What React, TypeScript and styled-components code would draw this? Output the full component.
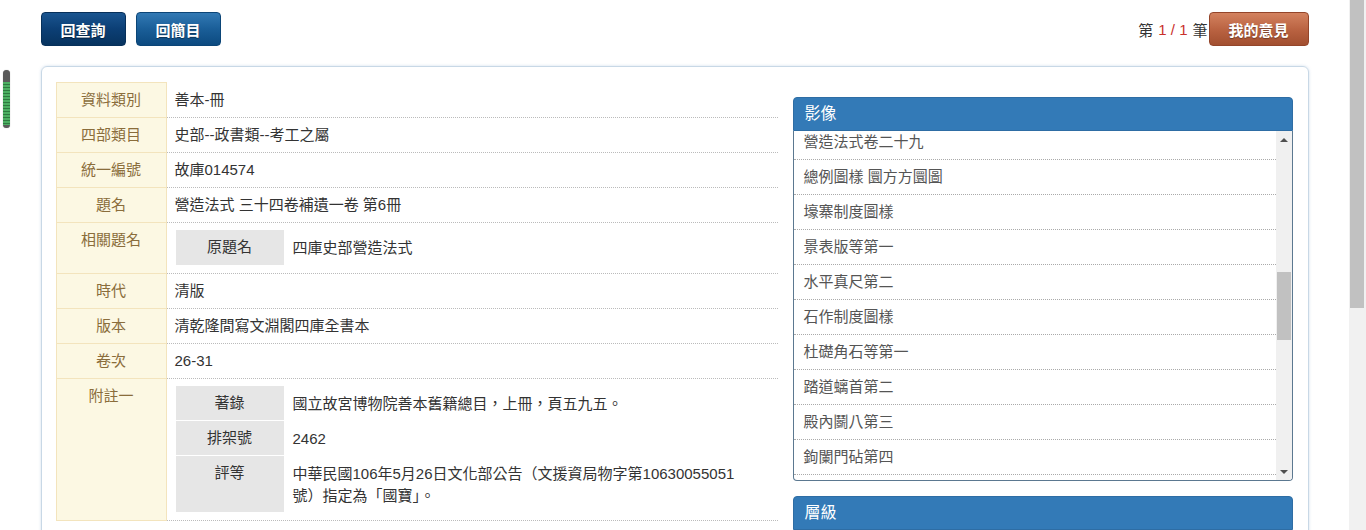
import { useEffect, useRef } from 'react';
import styled, { createGlobalStyle } from 'styled-components';

const GlobalStyle = createGlobalStyle`
  html, body {
    margin: 0;
    padding: 0;
    background: #fff;
  }
  body {
    font-family: "Liberation Sans", "Noto Sans CJK TC", sans-serif;
    font-size: 15px;
    color: #333;
    padding-right: 17px;
  }
`;

const Page = styled.div`
  width: 1268px;
  margin: 0 auto;
  padding: 12px 0 40px;
`;

const TopBar = styled.div`
  display: flex;
  align-items: center;
  justify-content: space-between;
  margin-bottom: 20px;
`;

const ButtonGroup = styled.div`
  display: flex;
  gap: 10px;
`;

const NavButton = styled.button<{ $dark?: boolean }>`
  height: 34px;
  width: 85px;
  border: 1px solid ${p => (p.$dark ? '#07305a' : '#0b4577')};
  border-radius: 4px;
  background: ${p =>
    p.$dark
      ? 'linear-gradient(to bottom, #1a5590 0%, #0c3f75 50%, #07335f 100%)'
      : 'linear-gradient(to bottom, #3279b4 0%, #1a5e98 50%, #0c4a80 100%)'};
  color: #fff;
  font-family: inherit;
  font-size: 15px;
  font-weight: bold;
  text-shadow: 0 1px 1px rgba(0, 0, 0, 0.4);
  cursor: pointer;
`;

const Pager = styled.div`
  display: flex;
  align-items: center;
  font-size: 15px;
  color: #333;
`;

const PagerNum = styled.span`
  color: #c9302c;
  margin: 0 5px;
`;

const OpinionButton = styled.button`
  height: 34px;
  width: 100px;
  margin-left: 1px;
  border: 1px solid #94452a;
  border-radius: 4px;
  background: linear-gradient(to bottom, #d3825f 0%, #b86140 55%, #a24f30 100%);
  color: #fff;
  font-family: inherit;
  font-size: 15px;
  font-weight: bold;
  text-shadow: 0 1px 1px rgba(0, 0, 0, 0.35);
  cursor: pointer;
`;

const MainPanel = styled.div`
  border: 1px solid #c8d8e6;
  border-radius: 6px;
  box-shadow: 0 0 3px rgba(120, 160, 200, 0.35);
  padding: 15px 15px 30px 14px;
  display: grid;
  grid-template-columns: 722px 500px;
  column-gap: 15px;
  align-items: start;
`;

const DetailTable = styled.table`
  width: 100%;
  border-collapse: collapse;
`;

const LabelCell = styled.th`
  width: 110px;
  box-sizing: border-box;
  background: #fcf8e3;
  border: 1px solid #f3e4bd;
  color: #8a6d3b;
  font-weight: normal;
  text-align: center;
  vertical-align: top;
  padding: 6px 8px 7px;
  line-height: 21px;
`;

const ValueCell = styled.td`
  border-bottom: 1px dotted #bbb;
  padding: 6px 8px 7px;
  line-height: 21px;
  vertical-align: top;
`;

const SubTable = styled.table`
  width: 100%;
  border-collapse: collapse;
  margin: 1px 0 0 1px;
`;

const SubLabel = styled.th`
  width: 108px;
  box-sizing: border-box;
  background: #e6e6e6;
  border-bottom: 1px solid #fff;
  color: #333;
  font-weight: normal;
  text-align: center;
  vertical-align: top;
  padding: 6px 8px 5px;
  line-height: 22px;
`;

const SubValue = styled.td`
  padding: 7px 8px 6px 9px;
  line-height: 22px;
  vertical-align: top;
`;

const SideColumn = styled.div`
  padding-top: 15px;
  display: flex;
  flex-direction: column;
  gap: 15px;
`;

const SideBox = styled.div``;

const SideHeader = styled.div`
  height: 34px;
  box-sizing: border-box;
  line-height: 32px;
  padding: 0 11px;
  background: #337ab7;
  border: 1px solid #2e6da4;
  border-radius: 4px 4px 0 0;
  color: #fff;
  font-size: 16px;
`;

const ListFrame = styled.div`
  position: relative;
  height: 350px;
  box-sizing: border-box;
  border: 1px solid #5b7890;
  border-top: none;
  border-radius: 0 0 4px 4px;
  overflow: hidden;
`;

const ImageList = styled.ul`
  list-style: none;
  margin: 0;
  padding: 0;
  height: 100%;
  overflow: hidden;
`;

const ImageItem = styled.li`
  height: 35px;
  box-sizing: border-box;
  line-height: 34px;
  padding: 0 10px;
  border-bottom: 1px dotted #aaa;
  color: #555;
  white-space: nowrap;
`;

const ScrollTrack = styled.div`
  position: absolute;
  top: 0;
  right: 0;
  bottom: 0;
  width: 16px;
  background: #f0f0f0;
`;

const ScrollArrow = styled.div<{ $down?: boolean }>`
  position: absolute;
  left: 4px;
  ${p => (p.$down ? 'bottom: 6px;' : 'top: 7px;')}
  width: 0;
  height: 0;
  border-left: 4px solid transparent;
  border-right: 4px solid transparent;
  ${p => (p.$down ? 'border-top: 4px solid #505050;' : 'border-bottom: 4px solid #505050;')}
`;

const ScrollThumb = styled.div<{ $top: number; $height: number }>`
  position: absolute;
  left: 1px;
  right: 1px;
  top: ${p => p.$top}px;
  height: ${p => p.$height}px;
  background: #c1c1c1;
`;

const LevelBody = styled.div`
  height: 300px;
  border: 1px solid #5b7890;
  border-top: none;
  border-radius: 0 0 4px 4px;
`;

const PageScrollbar = styled.div`
  position: fixed;
  top: 0;
  right: 0;
  width: 17px;
  height: 100vh;
  background: #f1f1f1;
`;

const PageThumb = styled.div`
  margin-left: 1px;
  width: 14px;
  height: 308px;
  background: #c1c1c1;
`;

const SideMarker = styled.div`
  position: fixed;
  left: 3px;
  top: 70px;
  width: 7px;
  height: 58px;
  border-radius: 4px;
  background:
    repeating-linear-gradient(to bottom, #4caf62 0 2px, #2f7a40 2px 3px) 0 12px / 100% 43px no-repeat,
    #5a5a5a;
  box-shadow: 0 0 1px rgba(0, 0, 0, 0.4);
`;

const details: { label: string; value: string }[] = [
  { label: '資料類別', value: '善本-冊' },
  { label: '四部類目', value: '史部--政書類--考工之屬' },
  { label: '統一編號', value: '故庫014574' },
  { label: '題名', value: '營造法式 三十四卷補遺一卷 第6冊' },
];

const details2: { label: string; value: string }[] = [
  { label: '時代', value: '清版' },
  { label: '版本', value: '清乾隆間寫文淵閣四庫全書本' },
  { label: '卷次', value: '26-31' },
];

const notes: { label: string; lines: string[] }[] = [
  { label: '著錄', lines: ['國立故宮博物院善本舊籍總目，上冊，頁五九五。'] },
  { label: '排架號', lines: ['2462'] },
  {
    label: '評等',
    lines: ['中華民國106年5月26日文化部公告（文援資局物字第10630055051', '號）指定為「國寶」。'],
  },
];

const images = [
  '營造法式卷二十九', '總例圖樣 圜方方圜圖', '壕寨制度圖樣', '景表版等第一', '水平真尺第二',
  '石作制度圖樣', '杜礎角石等第一', '踏道螭首第二', '殿內鬬八第三', '鉤闌門砧第四',
  '流盃渠第五', '營造法式卷三十',
];

export default function App() {
  const listRef = useRef<HTMLUListElement>(null);

  useEffect(() => {
    if (listRef.current) listRef.current.scrollTop = 6;
  }, []);

  return (
    <>
      <GlobalStyle />
      <SideMarker />
      <PageScrollbar>
        <PageThumb />
      </PageScrollbar>
      <Page>
        <TopBar>
          <ButtonGroup>
            <NavButton $dark>回查詢</NavButton>
            <NavButton>回簡目</NavButton>
          </ButtonGroup>
          <Pager>
            第<PagerNum>1 / 1</PagerNum>筆
            <OpinionButton>我的意見</OpinionButton>
          </Pager>
        </TopBar>

        <MainPanel>
          <DetailTable>
            <tbody>
              {details.map(d => (
                <tr key={d.label}>
                  <LabelCell>{d.label}</LabelCell>
                  <ValueCell>{d.value}</ValueCell>
                </tr>
              ))}
              <tr>
                <LabelCell>相關題名</LabelCell>
                <ValueCell>
                  <SubTable>
                    <tbody>
                      <tr>
                        <SubLabel>原題名</SubLabel>
                        <SubValue>四庫史部營造法式</SubValue>
                      </tr>
                    </tbody>
                  </SubTable>
                </ValueCell>
              </tr>
              {details2.map(d => (
                <tr key={d.label}>
                  <LabelCell>{d.label}</LabelCell>
                  <ValueCell>{d.value}</ValueCell>
                </tr>
              ))}
              <tr>
                <LabelCell>附註一</LabelCell>
                <ValueCell>
                  <SubTable>
                    <tbody>
                      {notes.map(n => (
                        <tr key={n.label}>
                          <SubLabel>{n.label}</SubLabel>
                          <SubValue>
                            {n.lines.map((line, i) => (
                              <span key={i}>
                                {i > 0 && <br />}
                                {line}
                              </span>
                            ))}
                          </SubValue>
                        </tr>
                      ))}
                    </tbody>
                  </SubTable>
                </ValueCell>
              </tr>
            </tbody>
          </DetailTable>

          <SideColumn>
            <SideBox>
              <SideHeader>影像</SideHeader>
              <ListFrame>
                <ImageList ref={listRef}>
                  {images.map((name, i) => (
                    <ImageItem key={i}>{name}</ImageItem>
                  ))}
                </ImageList>
                <ScrollTrack>
                  <ScrollArrow />
                  <ScrollThumb $top={141} $height={68} />
                  <ScrollArrow $down />
                </ScrollTrack>
              </ListFrame>
            </SideBox>
            <SideBox>
              <SideHeader>層級</SideHeader>
              <LevelBody />
            </SideBox>
          </SideColumn>
        </MainPanel>
      </Page>
    </>
  );
}
